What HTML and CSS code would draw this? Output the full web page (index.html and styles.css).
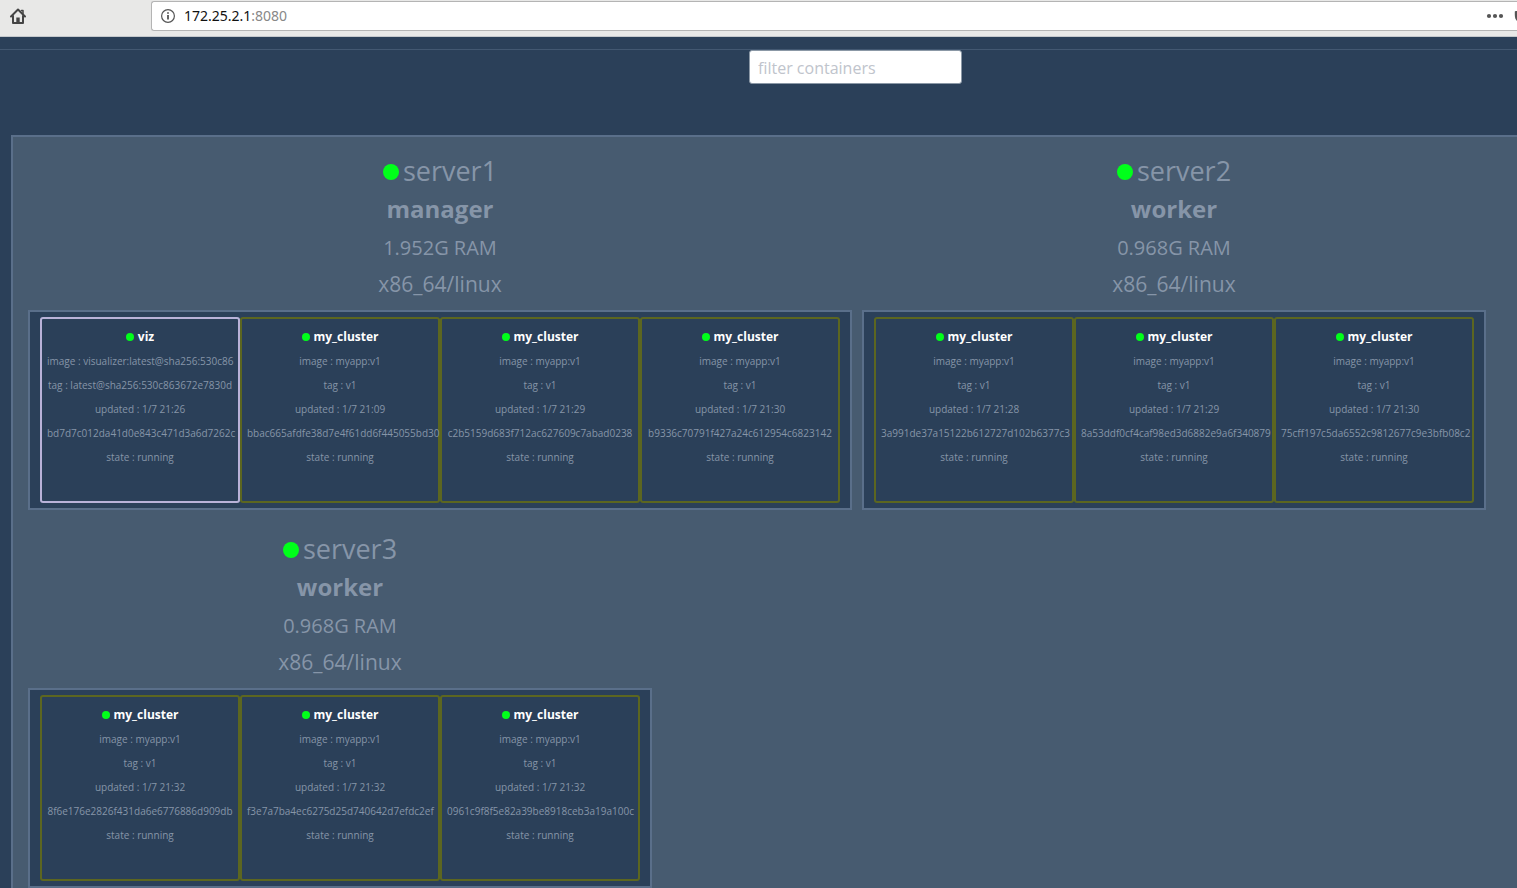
FILE: index.html
```html
<!DOCTYPE html>
<html lang="en">
<head>
<meta charset="utf-8">
<title>Visualizer</title>
<link rel="stylesheet" href="styles.css">
</head>
<body>
<header class="toolbar">
  <button class="home" type="button" aria-label="Home">
    <svg width="18" height="18" viewBox="0 0 18 18" fill="none" stroke="#444" stroke-width="2" stroke-linejoin="round" stroke-linecap="round"><path d="M2 9.5 9 2.5l7 7M4 9v7h10V9"/><path d="M7.300 15.500v-5h3.400v5z" fill="#444" stroke="none"/><path d="M12.500 3.500h1.500v3" stroke-width="1.500"/></svg>
  </button>
  <div class="address">
    <svg width="16" height="16" viewBox="0 0 16 16" fill="none" stroke="#555"><circle cx="8" cy="8" r="6.400" stroke-width="1.200"/><path d="M8 7v4.500M8 4.200v1.600" stroke-width="1.800"/></svg>
    <span class="url">172.25.2.1<span class="port">:8080</span></span>
    <button class="more" type="button" aria-label="Page actions">
      <svg width="18" height="6" viewBox="0 0 18 6" fill="#555"><circle cx="3" cy="3" r="2.100"/><circle cx="9" cy="3" r="2.100"/><circle cx="15" cy="3" r="2.100"/></svg>
    </button>
    <svg class="shield" width="3" height="10" viewBox="0 0 3 10" fill="#555"><path d="M1.500 0H3v10C1.500 8.500.8 6.500.8 4V.8z"/></svg>
  </div>
</header>
<main class="page">
  <div class="filter">
    <input class="filter-box" type="text" placeholder="filter containers" aria-label="filter containers">
  </div>
  <div class="cluster">
    <section class="node">
      <h2 class="host"><i class="dot"></i>server1</h2>
      <p class="role">manager</p>
      <p class="ram">1.952G RAM</p>
      <p class="arch">x86_64/linux</p>
      <div class="tasks">
        <article class="task viz"><h3><i class="dot"></i>viz</h3><p>image : visualizer:latest@sha256:530c86</p><p>tag : latest@sha256:530c863672e7830d</p><p>updated : 1/7 21:26</p><p>bd7d7c012da41d0e843c471d3a6d7262c</p><p>state : running</p></article>
        <article class="task"><h3><i class="dot"></i>my_cluster</h3><p>image : myapp:v1</p><p>tag : v1</p><p>updated : 1/7 21:09</p><p>bbac665afdfe38d7e4f61dd6f445055bd30</p><p>state : running</p></article>
        <article class="task"><h3><i class="dot"></i>my_cluster</h3><p>image : myapp:v1</p><p>tag : v1</p><p>updated : 1/7 21:29</p><p>c2b5159d683f712ac627609c7abad0238</p><p>state : running</p></article>
        <article class="task"><h3><i class="dot"></i>my_cluster</h3><p>image : myapp:v1</p><p>tag : v1</p><p>updated : 1/7 21:30</p><p>b9336c70791f427a24c612954c6823142</p><p>state : running</p></article>
      </div>
    </section>
    <section class="node">
      <h2 class="host"><i class="dot"></i>server2</h2>
      <p class="role">worker</p>
      <p class="ram">0.968G RAM</p>
      <p class="arch">x86_64/linux</p>
      <div class="tasks">
        <article class="task"><h3><i class="dot"></i>my_cluster</h3><p>image : myapp:v1</p><p>tag : v1</p><p>updated : 1/7 21:28</p><p>3a991de37a15122b612727d102b6377c3</p><p>state : running</p></article>
        <article class="task"><h3><i class="dot"></i>my_cluster</h3><p>image : myapp:v1</p><p>tag : v1</p><p>updated : 1/7 21:29</p><p>8a53ddf0cf4caf98ed3d6882e9a6f340879</p><p>state : running</p></article>
        <article class="task"><h3><i class="dot"></i>my_cluster</h3><p>image : myapp:v1</p><p>tag : v1</p><p>updated : 1/7 21:30</p><p>75cff197c5da6552c9812677c9e3bfb08c2</p><p>state : running</p></article>
      </div>
    </section>
    <section class="node">
      <h2 class="host"><i class="dot"></i>server3</h2>
      <p class="role">worker</p>
      <p class="ram">0.968G RAM</p>
      <p class="arch">x86_64/linux</p>
      <div class="tasks">
        <article class="task"><h3><i class="dot"></i>my_cluster</h3><p>image : myapp:v1</p><p>tag : v1</p><p>updated : 1/7 21:32</p><p>8f6e176e2826f431da6e6776886d909db</p><p>state : running</p></article>
        <article class="task"><h3><i class="dot"></i>my_cluster</h3><p>image : myapp:v1</p><p>tag : v1</p><p>updated : 1/7 21:32</p><p>f3e7a7ba4ec6275d25d740642d7efdc2ef</p><p>state : running</p></article>
        <article class="task"><h3><i class="dot"></i>my_cluster</h3><p>image : myapp:v1</p><p>tag : v1</p><p>updated : 1/7 21:32</p><p>0961c9f8f5e82a39be8918ceb3a19a100c</p><p>state : running</p></article>
      </div>
    </section>
  </div>
</main>
</body>
</html>
```
FILE: styles.css
```css
* { box-sizing: border-box; }
body {
  margin: 0;
  min-height: 100vh;
  display: flex;
  flex-direction: column;
  overflow: hidden;
  background: #2b4059;
  color: #8695a8;
  font-family: "Open Sans", "Noto Sans", sans-serif;
}
h2, h3, p { margin: 0; }
button { padding: 0; border: 0; background: none; display: flex; }

.toolbar {
  display: flex;
  height: 37px;
  padding-top: 1px;
  background: #e8e8e7;
  border-bottom: 1px solid #c4c8cc;
}
.home { margin: 6px 0 0 9px; }
.address {
  flex: 1;
  display: flex;
  align-items: center;
  height: 30px;
  margin-left: 124px;
  padding-left: 8px;
  background: #fff;
  border: 1px solid #b4b4b4;
  border-right: 0;
  border-radius: 3px 0 0 3px;
}
.url { margin-left: 8px; font: 14px/20px "Noto Sans", sans-serif; color: #111; }
.port { color: #888; }
.more { margin-left: auto; }
.shield { margin-left: 10px; }

.page { flex: 1; display: flex; flex-direction: column; padding-top: 12px; }
.filter {
  display: flex;
  justify-content: center;
  padding-left: 194px;
  border-top: 1px solid #435871;
}
.filter-box {
  width: 213px;
  height: 34px;
  padding: 2px 8px 0;
  border: 1px solid #8b98a6;
  border-radius: 3px;
  background: #fff;
  color: #333;
  font: 16px/24px "Open Sans", sans-serif;
}
.filter-box::placeholder { color: #c0c4cc; opacity: 1; }

.cluster {
  flex: 1;
  display: flex;
  flex-wrap: wrap;
  align-content: flex-start;
  gap: 20px 10px;
  margin: 51px 0 0 11px;
  padding: 15px 0 0 15px;
  background: #475b70;
  border: 2px solid #5a6f8a;
  border-width: 2px 0 0 2px;
}
.node { text-align: center; font-weight: 400; }
.host { font-size: 27px; line-height: 38px; font-weight: 400; }
.role { font-size: 24px; line-height: 38px; font-weight: 700; }
.ram { font-size: 20px; line-height: 40px; }
.arch { font-size: 21px; line-height: 32px; }
.dot { display: inline-block; border-radius: 50%; background: #00ff1a; }
.host .dot { width: 16px; height: 16px; margin-right: 4px; vertical-align: 1px; }
.tasks {
  display: flex;
  margin-top: 10px;
  padding: 5px 10px;
  background: #2b4059;
  border: 2px solid #5a6f8a;
}
.task {
  width: 200px;
  height: 186px;
  padding: 8px 7px;
  overflow: hidden;
  white-space: nowrap;
  font-size: 10px;
  line-height: 24px;
  border-radius: 3px;
  box-shadow: inset 0 0 0 2px #5c6620;
}
.viz { box-shadow: inset 0 0 0 2px #b9b2d8; }
.task h3 { font-size: 12px; line-height: 24px; color: #fff; }
.task .dot { width: 8px; height: 8px; margin-right: 4px; }
```
